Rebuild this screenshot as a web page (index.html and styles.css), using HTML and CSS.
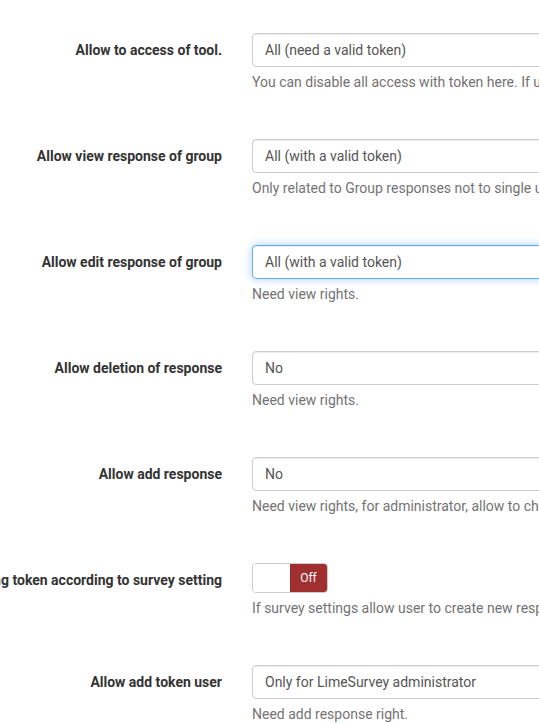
FILE: index.html
```html
<!DOCTYPE html>
<html>
<head>
<meta charset="utf-8">
<link rel="stylesheet" href="styles.css">
</head>
<body>
<div class="form">
  <div class="row">
    <div class="label"><span>Allow to access of tool.</span></div>
    <div class="field">
      <div class="select">All (need a valid token)</div>
      <div class="help">You can disable all access with token here. If user set a token in url, it was checked.</div>
    </div>
  </div>
  <div class="row">
    <div class="label"><span>Allow view response of group</span></div>
    <div class="field">
      <div class="select">All (with a valid token)</div>
      <div class="help">Only related to Group responses not to single user responses.</div>
    </div>
  </div>
  <div class="row">
    <div class="label"><span>Allow edit response of group</span></div>
    <div class="field">
      <div class="select focus">All (with a valid token)</div>
      <div class="help">Need view rights.</div>
    </div>
  </div>
  <div class="row">
    <div class="label"><span>Allow deletion of response</span></div>
    <div class="field">
      <div class="select">No</div>
      <div class="help">Need view rights.</div>
    </div>
  </div>
  <div class="row">
    <div class="label"><span>Allow add response</span></div>
    <div class="field">
      <div class="select">No</div>
      <div class="help">Need view rights, for administrator, allow to choose the token.</div>
    </div>
  </div>
  <div class="row">
    <div class="label"><span>Allow creating token according to survey setting</span></div>
    <div class="field">
      <div class="toggle"><span class="toggle-on"></span><span class="toggle-off">Off</span></div>
      <div class="help">If survey settings allow user to create new responses with new token.</div>
    </div>
  </div>
  <div class="row">
    <div class="label"><span>Allow add token user</span></div>
    <div class="field">
      <div class="select">Only for LimeSurvey administrator</div>
      <div class="help">Need add response right.</div>
    </div>
  </div>
</div>
</body>
</html>
```
FILE: styles.css
```css
html, body {
  margin: 0;
  padding: 0;
  background: #fff;
  overflow: hidden;
}
body {
  font-family: Roboto, "Liberation Sans", sans-serif;
  font-size: 14px;
  color: #333;
}
.form {
  padding-top: 33px;
  width: 800px;
}
.row {
  display: grid;
  grid-template-columns: 222px 420px;
  column-gap: 30px;
  margin-bottom: 47px;
}
.label {
  display: flex;
  justify-content: flex-end;
  align-items: center;
  height: 34px;
  white-space: nowrap;
  font-weight: bold;
  color: #333;
}
.select {
  box-sizing: border-box;
  height: 34px;
  border: 1px solid #ccc;
  border-radius: 4px;
  padding: 0 12px;
  line-height: 32px;
  color: #555;
  background: #fff;
  box-shadow: inset 0 1px 1px rgba(0,0,0,.075);
  white-space: nowrap;
}
.select.focus {
  border-color: #66afe9;
  box-shadow: inset 0 1px 1px rgba(0,0,0,.075), 0 0 8px rgba(102,175,233,.6);
}
.help {
  margin-top: 5px;
  line-height: 20px;
  color: #737373;
  white-space: nowrap;
}
.toggle {
  box-sizing: border-box;
  display: flex;
  width: 76px;
  height: 30px;
  border: 1px solid #ccc;
  border-radius: 4px;
  overflow: hidden;
}
.toggle-on {
  flex: 1;
  background: #fff;
}
.toggle-off {
  width: 37px;
  background: #a0302f;
  color: #fff;
  font-size: 12px;
  line-height: 28px;
  text-align: center;
}
```
